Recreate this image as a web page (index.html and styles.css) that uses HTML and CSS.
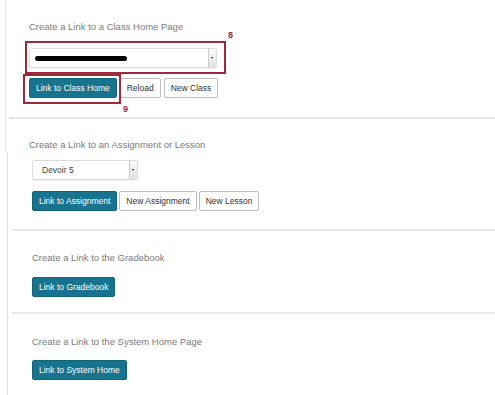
FILE: index.html
```html
<!DOCTYPE html>
<html>

<head>
  <meta charset="utf-8" />
  <title>Course links</title>
  <meta name="viewport" content="width=device-width, initial-scale=1">

  <link rel="stylesheet" href="styles.css">
</head>

<body>
  <div class="shot shot-top">
    <div class="section">
      <h2 class="title">Create a Link to a Class Home Page</h2>
      <div class="picker picker-class">
        <span class="redacted"></span>
        <span class="arrow"></span>
      </div>
      <div class="actions">
        <button class="btn btn-primary">Link to Class Home</button>
        <button class="btn">Reload</button>
        <button class="btn">New Class</button>
      </div>
    </div>
    <div class="callout callout-8"><span class="callout-num">8</span></div>
    <div class="callout callout-9"><span class="callout-num">9</span></div>
    <div class="sep"></div>
    <h2 class="title title-lesson">Create a Link to an Assignment or Lesson</h2>
  </div>

  <div class="shot shot-bottom">
    <div class="picker picker-lesson">
      <span class="picker-text">Devoir 5</span>
      <span class="arrow"></span>
    </div>
    <div class="actions actions-lesson">
      <button class="btn btn-primary">Link to Assignment</button>
      <button class="btn">New Assignment</button>
      <button class="btn">New Lesson</button>
    </div>
    <div class="sep sep-lesson"></div>

    <h2 class="title title-grades">Create a Link to the Gradebook</h2>
    <div class="actions actions-grades">
      <button class="btn btn-primary">Link to Gradebook</button>
    </div>
    <div class="sep sep-grades"></div>

    <h2 class="title title-system">Create a Link to the System Home Page</h2>
    <div class="actions actions-system">
      <button class="btn btn-primary">Link to System Home</button>
    </div>
  </div>
</body>

</html>
```

FILE: styles.css
```css
body {
  margin: 0;
  background: #fff;
  font-family: "Liberation Sans", Arial, sans-serif;
  color: #333;
}

.shot {
  border-left: 1px solid #e6e6e6;
}

.shot-top {
  position: relative;
  margin-left: 5px;
  padding: 21px 0 1px 23px;
}

.shot-bottom {
  margin-left: 7px;
  padding: 8px 0 20px 24px;
}

.title {
  margin: 0;
  font-size: 9.5px;
  line-height: 12px;
  font-weight: normal;
  color: #7b7b7b;
}

.picker {
  display: flex;
  align-items: center;
  height: 20px;
  box-sizing: border-box;
  border: 1px solid #dcdcdc;
  border-radius: 2px;
  background: #fff;
  box-shadow: 0 1px 1px rgba(0, 0, 0, .06);
}

.picker-class {
  width: 188px;
  margin-top: 15px;
}

.picker-lesson {
  width: 106px;
}

.picker-text {
  flex: 1;
  padding-left: 9px;
  font-size: 8.5px;
  color: #444;
}

.redacted {
  flex: none;
  width: 92px;
  height: 5px;
  margin: 0 auto 0 5px;
  background: #000;
  border-radius: 3px;
}

.arrow {
  position: relative;
  flex: none;
  align-self: stretch;
  width: 7px;
  margin-left: auto;
  border-left: 1px solid #c9c9c9;
  border-radius: 0 2px 2px 0;
  background: linear-gradient(#fafafa, #e2e2e2);
}

.arrow::after {
  content: "";
  position: absolute;
  left: 2px;
  top: 8px;
  border-left: 1.5px solid transparent;
  border-right: 1.5px solid transparent;
  border-top: 2px solid #222;
}

.actions {
  display: flex;
  gap: 3px;
  margin-top: 10px;
}

.actions-lesson {
  gap: 2px;
  margin-top: 11px;
}

.actions-grades {
  margin-top: 13px;
}

.actions-system {
  margin-top: 12px;
}

.btn {
  height: 20px;
  box-sizing: border-box;
  padding: 0 6px;
  font-family: inherit;
  font-size: 8.5px;
  line-height: 18px;
  color: #333;
  background: #fff;
  border: 1px solid #bdbdbd;
  border-radius: 2px;
  cursor: pointer;
}

.btn-primary {
  color: #fff;
  background: #17738e;
  border-color: #126479;
}

.sep {
  height: 2px;
  margin: 19px 0 0 -20px;
  background: #e8e8e8;
}

.sep-lesson {
  margin-top: 18px;
}

.sep-grades {
  margin-top: 15px;
}

.title-lesson {
  margin-top: 20px;
}

.title-grades {
  margin-top: 21px;
}

.title-system {
  margin-top: 22px;
}

/* annotation boxes drawn over the form */
.callout {
  position: absolute;
  box-sizing: border-box;
  border: 2px solid #9c2a3c;
}

.callout-8 {
  left: 19px;
  top: 41px;
  width: 201px;
  height: 33px;
}

.callout-9 {
  left: 17px;
  top: 74px;
  width: 98px;
  height: 30px;
}

.callout-num {
  position: absolute;
  font-size: 9px;
  font-weight: bold;
  line-height: 10px;
  color: #9c2a3c;
}

.callout-8 .callout-num {
  left: 201px;
  top: -13px;
}

.callout-9 .callout-num {
  left: 98px;
  top: 28px;
}
```
